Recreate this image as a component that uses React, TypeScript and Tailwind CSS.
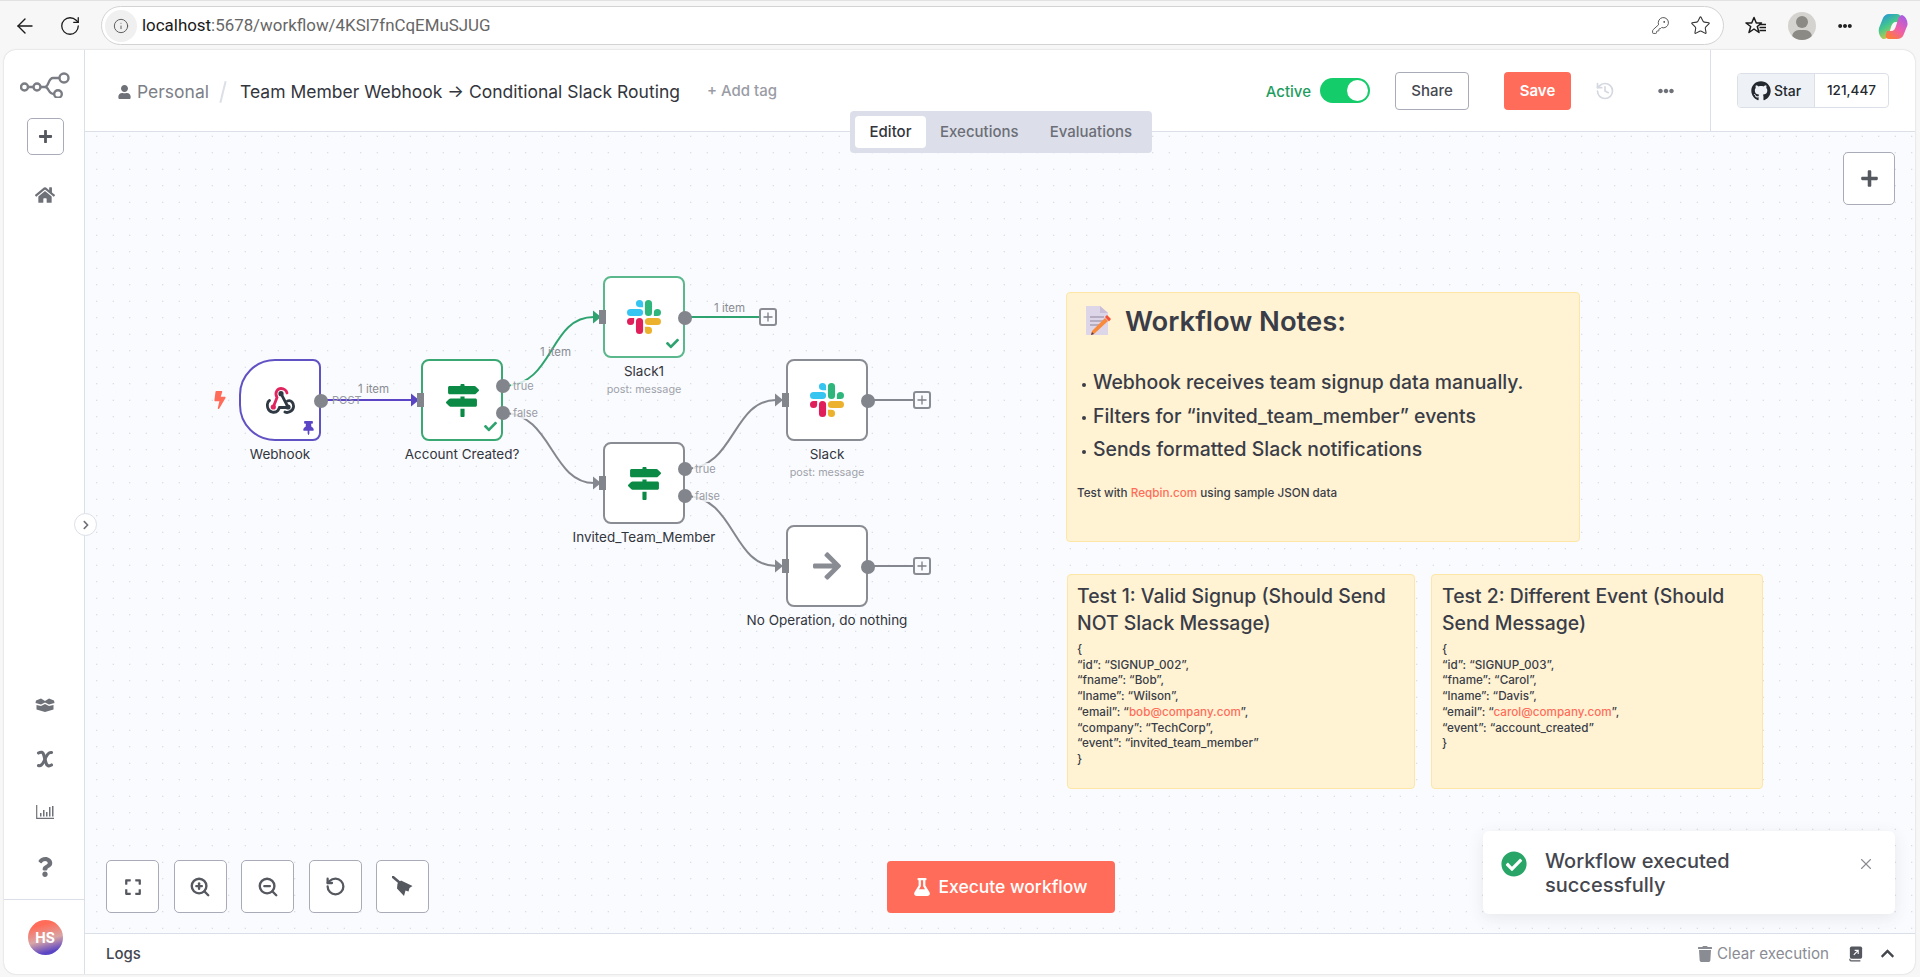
import React from 'react';
import { ArrowLeft, RotateCw, RotateCcw, Info, KeyRound, Star, X, History, ZoomIn, ZoomOut } from 'lucide-react';
import {
  FaHome, FaPlus, FaQuestion, FaExpand,
  FaUser, FaEllipsisH, FaGithub, FaMapSigns, FaCheck, FaBolt, FaThumbtack, FaArrowRight,
  FaFlask, FaTrash, FaCheckCircle, FaChevronUp, FaChevronRight,
} from 'react-icons/fa';

function SlackIcon() {
  return (
    <svg viewBox="0 0 24 24" className="w-[34px] h-[34px]">
      <path fill="#E01E5A" d="M5.042 15.165a2.528 2.528 0 0 1-2.52 2.523A2.528 2.528 0 0 1 0 15.165a2.527 2.527 0 0 1 2.522-2.52h2.52v2.52zM6.313 15.165a2.527 2.527 0 0 1 2.521-2.52 2.527 2.527 0 0 1 2.521 2.52v6.313A2.528 2.528 0 0 1 8.834 24a2.528 2.528 0 0 1-2.521-2.522v-6.313z" />
      <path fill="#36C5F0" d="M8.834 5.042a2.528 2.528 0 0 1-2.521-2.52A2.528 2.528 0 0 1 8.834 0a2.528 2.528 0 0 1 2.521 2.522v2.52H8.834zM8.834 6.313a2.528 2.528 0 0 1 2.521 2.521 2.528 2.528 0 0 1-2.521 2.521H2.522A2.528 2.528 0 0 1 0 8.834a2.528 2.528 0 0 1 2.522-2.521h6.312z" />
      <path fill="#2EB67D" d="M18.956 8.834a2.528 2.528 0 0 1 2.522-2.521A2.528 2.528 0 0 1 24 8.834a2.528 2.528 0 0 1-2.522 2.521h-2.522V8.834zM17.688 8.834a2.528 2.528 0 0 1-2.523 2.521 2.527 2.527 0 0 1-2.52-2.521V2.522A2.527 2.527 0 0 1 15.165 0a2.528 2.528 0 0 1 2.523 2.522v6.312z" />
      <path fill="#ECB22E" d="M15.165 18.956a2.528 2.528 0 0 1 2.523 2.522A2.528 2.528 0 0 1 15.165 24a2.527 2.527 0 0 1-2.52-2.522v-2.522h2.52zM15.165 17.688a2.527 2.527 0 0 1-2.52-2.523 2.526 2.526 0 0 1 2.52-2.52h6.313A2.527 2.527 0 0 1 24 15.165a2.528 2.528 0 0 1-2.522 2.523h-6.313z" />
    </svg>
  );
}

function WebhookIcon() {
  return (
    <svg viewBox="0 0 29 27" className="w-[29px] h-[27px]" fill="none" strokeWidth="2.800" strokeLinecap="round">
      <path stroke="#2f3943" d="M3.500 13.500C1 15 1 19 2 21.500C3.500 25.500 9 26.500 12 23.500L13.500 20.500H22" />
      <path stroke="#2f3943" d="M15 6.700L22 20" />
      <path stroke="#2f3943" d="M21.500 14C25 12.500 28 16 27.500 20C27 24 22 26.500 19 25" />
      <path stroke="#e0245e" d="M7.300 20L11 10.500C8 5 12 1.500 15 1.500C18 1.500 20.500 3.500 21 6" />
      <circle cx="7.300" cy="20" r="2.600" fill="#e0245e" />
      <circle cx="15" cy="6.700" r="2.600" fill="#2f3943" />
      <circle cx="22" cy="20" r="2.600" fill="#2f3943" />
    </svg>
  );
}

function IfIcon() {
  return <FaMapSigns className="w-[33px] h-[33px] text-[#0b8a46]" />;
}

function NoOpIcon() {
  return <FaArrowRight className="w-[32px] h-[32px] text-[#8a8c94]" />;
}

function BroomIcon() {
  return (
    <svg viewBox="0 0 21 21" className="w-[21px] h-[21px]">
      <path d="M1 1L7.500 6.500" stroke="#565860" strokeWidth="2.500" strokeLinecap="round" />
      <path d="M5.500 7.500L9 4.500L20.500 10L17.500 12L16.500 15.500L13.500 14.500L12 20L5 12.500Z" fill="#565860" />
    </svg>
  );
}

function Dot({ cls }: { cls: string }) {
  return <span className={`absolute w-[14px] h-[14px] rounded-full bg-[#83858d] ${cls}`} />;
}

function InHandle() {
  return <span className="absolute left-[-6px] top-1/2 -translate-y-1/2 w-[7px] h-[14px] bg-[#83858d]" />;
}

function Node({ pos, border, shape, label, sub, children }: { pos: string; border: string; shape?: string; label: string; sub?: string; children: React.ReactNode }) {
  return (
    <div className={`absolute w-[82px] flex flex-col items-center ${pos}`}>
      <div className={`relative w-[82px] h-[82px] bg-white border-2 flex items-center justify-center ${border} ${shape ?? 'rounded-[8px]'}`}>
        {children}
      </div>
      <div className="mt-[3px] whitespace-nowrap text-[13.5px] leading-[20px] text-[#33353d]">{label}</div>
      {sub && <div className="mt-[1px] whitespace-nowrap text-[10.8px] leading-[16px] text-[#a0a2aa]">{sub}</div>}
    </div>
  );
}

function EdgeLabel({ pos, children }: { pos: string; children: React.ReactNode }) {
  return <span className={`absolute -translate-y-1/2 whitespace-nowrap text-[11.5px] leading-[14px] text-[#8a8c94] ${pos}`}>{children}</span>;
}

function PortLabel({ pos, children }: { pos: string; children: React.ReactNode }) {
  return <span className={`absolute -translate-y-1/2 whitespace-nowrap bg-[#f9fbfe]/80 pl-[2px] text-[11px] leading-[12px] text-[#9a9ca5] ${pos}`}>{children}</span>;
}

function AddBox({ pos }: { pos: string }) {
  return (
    <div className={`absolute w-[18px] h-[18px] rounded-[3px] border-2 border-[#8a8c94] bg-[#f9fbfe] flex items-center justify-center ${pos}`}>
      <svg viewBox="0 0 10 10" className="w-[10px] h-[10px]"><path d="M5 0.500V9.500M0.500 5H9.500" stroke="#7d7f87" strokeWidth="1.300" /></svg>
    </div>
  );
}

function ZoomBtn({ children }: { children: React.ReactNode }) {
  return <button className="w-[53px] h-[53px] rounded-[5px] border border-[#a9acb8] bg-white flex items-center justify-center text-[#565860]">{children}</button>;
}

function NoteEmoji() {
  return (
    <svg viewBox="0 0 26 30" className="w-[26px] h-[30px] shrink-0">
      <path d="M1 0H15L23 7V29H1Z" fill="#ddd5e8" />
      <path d="M15 0L23 7H15Z" fill="#c8bed8" />
      <path d="M5 11H19M5 15H19M5 19H15" stroke="#a9a0b5" strokeWidth="1.400" />
      <path d="M9 28L6 29L7 25L20 12L23 15Z" fill="#f98a3c" />
      <path d="M20 11L22 9L26 13L24 15.500Z" fill="#f4523b" />
      <path d="M6 29L7 26L9 28Z" fill="#5a3a44" />
    </svg>
  );
}

function Copilot() {
  return (
    <svg viewBox="0 0 30 27" className="w-[30px] h-[27px]">
      <defs>
        <linearGradient id="cpA" x1="0" y1="0" x2="0.6" y2="1">
          <stop offset="0" stopColor="#1f8be8" />
          <stop offset="0.5" stopColor="#46c88a" />
          <stop offset="1" stopColor="#f4c638" />
        </linearGradient>
        <linearGradient id="cpB" x1="1" y1="0" x2="0.3" y2="1">
          <stop offset="0" stopColor="#9a5cf0" />
          <stop offset="0.6" stopColor="#ef5fa8" />
          <stop offset="1" stopColor="#fb7a3c" />
        </linearGradient>
      </defs>
      <path d="M11 1H19C21 1 22 2 23 4L25 9H18C15 9 14 11 13 14L11 21C10 24 8 26 6 26H5C2 24 0 20 1 15L5 5C6 3 8 1 11 1Z" fill="url(#cpA)" />
      <path d="M19 26H11C9 26 8 25 7.500 23L9 18H13C16 18 17 16 18 13L19.500 8C20 5 22 2 24 2C27 3 30 7 29.500 12L25.500 22C24.500 24.500 22 26 19 26Z" fill="url(#cpB)" />
    </svg>
  );
}

function FavIcon() {
  return (
    <svg viewBox="0 0 22 20" className="w-[22px] h-[20px]" fill="none" stroke="#1a1a1a" strokeWidth="1.500" strokeLinejoin="round">
      <path d="M9 1.500L11.300 7H16.500L12.300 10.500L14 16.500L9 13L4 16.500L5.700 10.500L1 7H6.700Z" />
      <path d="M14 8.500H21M14.500 11.500H21M14.500 14.500H21" />
    </svg>
  );
}

function Logo() {
  return (
    <svg viewBox="0 0 50 26" className="w-[50px] h-[26px]" fill="none" stroke="#7b7d85" strokeWidth="2.400">
      <circle cx="4.500" cy="15" r="3.500" />
      <circle cx="17" cy="15" r="3.500" />
      <circle cx="44" cy="6" r="4.500" />
      <circle cx="38" cy="22" r="3.800" />
      <path d="M8 15H13.500M20.500 15H25C29 15 28 6 33 6H39.500M25 15C29 15 28 22 34 22" />
    </svg>
  );
}

function BoxIcon() {
  return (
    <svg viewBox="0 0 20 14" className="w-[20px] h-[14px]">
      <path d="M1 2.500L6 0.500L10 3L14 0.500L19 2.500L19.500 5L14 6.500L10 4.500L6 6.500L0.500 5Z" fill="#6f7179" />
      <path d="M1.500 7L6 8L10 6L14 8L18.500 7V11.500L10 14L1.500 11.500Z" fill="#6f7179" />
    </svg>
  );
}

function VarIcon() {
  return (
    <svg viewBox="0 0 18 18" className="w-[18px] h-[18px]" fill="none" stroke="#6a6c74" strokeWidth="3.100" strokeLinecap="round">
      <path d="M2.500 3C5 1.500 7 2 7.800 5L10 13C10.800 16 13 16.500 15.500 15" />
      <path d="M15.500 2.500C13 2 11 4 9 9C7 14 5 16.500 2.500 15.500" />
    </svg>
  );
}

function ChartIcon() {
  return (
    <svg viewBox="0 0 18 14" className="w-[18px] h-[14px]">
      <path d="M0.700 0V13.300H18" fill="none" stroke="#6f7179" strokeWidth="1.200" />
      <path d="M4 8H5.500V11.500H4ZM7 5H8.500V11.500H7ZM10 7H11.500V11.500H10ZM13 2H14.500V11.500H13ZM16 1H17.500V11.500H16Z" fill="#6f7179" />
    </svg>
  );
}

function Edges() {
  return (
    <svg className="absolute inset-0 w-full h-full pointer-events-none" fill="none" strokeWidth="2">
      <path d="M236 268H326" stroke="#5b45c5" />
      <path d="M326 261.500L334 268L326 274.500Z" fill="#5b45c5" />
      <path d="M418 254C470 254 463 185 509 185" stroke="#2ea36f" />
      <path d="M508 178.500L516 185L508 191.500Z" fill="#2ea36f" />
      <path d="M600 185H676" stroke="#2ea36f" />
      <path d="M418 281C467 281 466 351 509 351" stroke="#85878f" />
      <path d="M508 344.500L516 351L508 357.500Z" fill="#85878f" />
      <path d="M600 337C650 337 647 268 691 268" stroke="#85878f" />
      <path d="M690 261.500L698 268L690 274.500Z" fill="#85878f" />
      <path d="M600 364C650 364 647 434 691 434" stroke="#85878f" />
      <path d="M690 427.500L698 434L690 440.500Z" fill="#85878f" />
      <path d="M782 268H830" stroke="#85878f" />
      <path d="M782 434H830" stroke="#85878f" />
    </svg>
  );
}

function Canvas() {
  return (
    <div className="relative flex-1 bg-[#f9fbfe] bg-[radial-gradient(circle,#c3c6d0_0.7px,transparent_0.9px)] bg-[size:16.5px_16.5px] bg-[position:3.5px_-4px] overflow-hidden">
      <Edges />

      <EdgeLabel pos="left-[273px] top-[257px]">1 item</EdgeLabel>
      <EdgeLabel pos="left-[455px] top-[220px]">1 item</EdgeLabel>
      <EdgeLabel pos="left-[629px] top-[176px]">1 item</EdgeLabel>
      <span className="absolute left-[247px] top-[268px] -translate-y-1/2 text-[11px] leading-[12px] text-[#9a9ca5]">POST</span>
      <PortLabel pos="left-[426px] top-[254px]">true</PortLabel>
      <PortLabel pos="left-[426px] top-[281px]">false</PortLabel>
      <PortLabel pos="left-[608px] top-[337px]">true</PortLabel>
      <PortLabel pos="left-[608px] top-[364px]">false</PortLabel>

      <FaBolt className="absolute left-[129px] top-[259px] w-[12px] h-[18px] text-[#ff6d5a]" />

      <Node pos="left-[154px] top-[227px]" border="border-[#6152c4]" shape="rounded-[36px_8px_8px_36px]" label="Webhook">
        <WebhookIcon />
        <Dot cls="right-[-9px] top-[33px]" />
        <FaThumbtack className="absolute right-[4px] bottom-[4px] w-[13px] h-[14px] text-[#5b45c5]" />
      </Node>

      <Node pos="left-[336px] top-[227px]" border="border-[#3aa873]" label="Account Created?">
        <IfIcon />
        <InHandle />
        <Dot cls="right-[-9px] top-[18px]" />
        <Dot cls="right-[-9px] top-[45px]" />
        <FaCheck className="absolute right-[4px] bottom-[6px] w-[13px] h-[13px] text-[#2ea36f]" />
      </Node>

      <Node pos="left-[518px] top-[144px]" border="border-[#5ab88c]" label="Slack1" sub="post: message">
        <SlackIcon />
        <InHandle />
        <Dot cls="right-[-9px] top-[33px]" />
        <FaCheck className="absolute right-[4px] bottom-[6px] w-[13px] h-[13px] text-[#2ea36f]" />
      </Node>

      <Node pos="left-[518px] top-[310px]" border="border-[#8a8c94]" label="Invited_Team_Member">
        <IfIcon />
        <InHandle />
        <Dot cls="right-[-9px] top-[18px]" />
        <Dot cls="right-[-9px] top-[45px]" />
      </Node>

      <Node pos="left-[701px] top-[227px]" border="border-[#8a8c94]" label="Slack" sub="post: message">
        <SlackIcon />
        <InHandle />
        <Dot cls="right-[-9px] top-[33px]" />
      </Node>

      <Node pos="left-[701px] top-[393px]" border="border-[#8a8c94]" label="No Operation, do nothing">
        <NoOpIcon />
        <InHandle />
        <Dot cls="right-[-9px] top-[33px]" />
      </Node>

      <AddBox pos="left-[674px] top-[176px]" />
      <AddBox pos="left-[828px] top-[259px]" />
      <AddBox pos="left-[828px] top-[425px]" />

      {/* Sticky notes */}
      <div className="absolute left-[981px] top-[160px] w-[514px] h-[250px] rounded-[4px] border border-[#fde6a6] bg-[#fff3d4] text-[#3a3d47]">
        <div className="flex items-center gap-[14px] pl-[18px] pt-[11px]">
          <NoteEmoji />
          <span className="text-[27.4px] leading-[34px] font-semibold">Workflow Notes:</span>
        </div>
        <ul className="mt-[28px] pl-[15px] text-[19.4px] leading-[33.5px] font-medium">
          {['Webhook receives team signup data manually.', 'Filters for “invited_team_member” events', 'Sends formatted Slack notifications'].map((t) => (
            <li key={t} className="flex items-center gap-[7px]">
              <span className="w-[4px] h-[4px] mt-[4px] rounded-full bg-[#3a3d47] shrink-0" />
              {t}
            </li>
          ))}
        </ul>
        <p className="mt-[18px] pl-[10px] text-[11.7px] leading-[16px] font-medium">
          Test with <span className="text-[#ff6d5a]">Reqbin.com</span> using sample JSON data
        </p>
      </div>

      <div className="absolute left-[982px] top-[442px] w-[348px] h-[215px] rounded-[4px] border border-[#fde6a6] bg-[#fff3d4] text-[#3a3d47] pl-[9px] pr-[10px] pt-[8px]">
        <h3 className="text-[19.4px] leading-[27px] font-medium">Test 1: Valid Signup (Should Send NOT Slack Message)</h3>
        <div className="mt-[5px] text-[11.7px] leading-[15.7px] font-medium">
          <div>{'{'}</div>
          <div>“id”: “SIGNUP_002”,</div>
          <div>“fname”: “Bob”,</div>
          <div>“lname”: “Wilson”,</div>
          <div>“email”: “<span className="text-[#ff6d5a]">bob@company.com</span>”,</div>
          <div>“company”: “TechCorp”,</div>
          <div>“event”: “invited_team_member”</div>
          <div>{'}'}</div>
        </div>
      </div>

      <div className="absolute left-[1346px] top-[442px] w-[332px] h-[215px] rounded-[4px] border border-[#fde6a6] bg-[#fff3d4] text-[#3a3d47] px-[10px] pt-[8px]">
        <h3 className="text-[19.4px] leading-[27px] font-medium">Test 2: Different Event (Should Send Message)</h3>
        <div className="mt-[5px] text-[11.7px] leading-[15.7px] font-medium">
          <div>{'{'}</div>
          <div>“id”: “SIGNUP_003”,</div>
          <div>“fname”: “Carol”,</div>
          <div>“lname”: “Davis”,</div>
          <div>“email”: “<span className="text-[#ff6d5a]">carol@company.com</span>”,</div>
          <div>“event”: “account_created”</div>
          <div>{'}'}</div>
        </div>
      </div>

      {/* Floating controls */}
      <button className="absolute right-[20px] top-[20px] w-[52px] h-[53px] rounded-[5px] border border-[#a9acb8] bg-white flex items-center justify-center text-[#565860]">
        <FaPlus className="w-[19px] h-[19px]" />
      </button>

      <div className="absolute left-[21px] bottom-[20px] flex gap-[14.5px]">
        <ZoomBtn><FaExpand className="w-[18px] h-[18px]" /></ZoomBtn>
        <ZoomBtn><ZoomIn className="w-[22px] h-[22px]" strokeWidth={2.6} /></ZoomBtn>
        <ZoomBtn><ZoomOut className="w-[22px] h-[22px]" strokeWidth={2.6} /></ZoomBtn>
        <ZoomBtn><RotateCcw className="w-[21px] h-[21px]" strokeWidth={2.6} /></ZoomBtn>
        <ZoomBtn><BroomIcon /></ZoomBtn>
      </div>

      <button className="absolute left-[802px] bottom-[20px] w-[228px] h-[52px] rounded-[4px] bg-[#ff6d5a] text-white flex items-center justify-center gap-[8px] text-[17.5px] font-medium">
        <FaFlask className="w-[16px] h-[18px]" />
        Execute workflow
      </button>

      <div className="absolute right-[20px] bottom-[19px] w-[412px] h-[83px] rounded-[6px] bg-white shadow-[0_4px_16px_rgba(68,68,80,0.1)] flex items-start pl-[18px] pt-[18px]">
        <FaCheckCircle className="w-[26px] h-[26px] text-[#29a568] mt-[2px] shrink-0" />
        <div className="ml-[18px] w-[230px] text-[20px] leading-[24px] font-medium text-[#45474f]">Workflow executed successfully</div>
        <X className="ml-auto mr-[20px] mt-[6px] w-[18px] h-[18px] text-[#8a8c94]" strokeWidth={1.5} />
      </div>
    </div>
  );
}

export default function App() {
  return (
    <div className="h-[977px] w-[1920px] flex flex-col bg-[#f7f7f7] font-['Inter',sans-serif] overflow-hidden pb-[3px]">
      {/* Browser bar */}
      <div className="h-[50px] shrink-0 flex items-center border-t border-[#e2e2e2] text-[#1a1a1a]">
        <ArrowLeft className="ml-[13px] w-[24px] h-[24px]" strokeWidth={1.4} />
        <RotateCw className="ml-[22px] w-[22px] h-[22px]" strokeWidth={1.4} />
        <div className="ml-[20px] w-[1623px] h-[39px] rounded-full border border-[#d3d3d3] bg-white flex items-center pl-[3px]">
          <span className="w-[32px] h-[32px] rounded-full bg-[#f0f0f0] flex items-center justify-center">
            <Info className="w-[16px] h-[16px] text-[#555]" strokeWidth={1.4} />
          </span>
          <span className="ml-[5px] font-['Roboto',sans-serif] text-[16.9px] text-[#666]"><span className="text-[#1a1a1a]">localhost</span>:5678/workflow/4KSl7fnCqEMuSJUG</span>
          <KeyRound className="ml-auto w-[19px] h-[19px] text-[#444]" strokeWidth={1.1} />
          <Star className="ml-[20px] mr-[12px] w-[21px] h-[21px] text-[#333]" strokeWidth={1.2} />
        </div>
        <span className="ml-[21px]"><FavIcon /></span>
        <span className="ml-[21px] w-[28px] h-[28px] rounded-full bg-[#d4d3cf] relative overflow-hidden shrink-0">
          <span className="absolute left-[8px] top-[4px] w-[12px] h-[12px] rounded-full bg-[#8c8a85]" />
          <span className="absolute left-[4px] top-[18px] w-[20px] h-[14px] rounded-full bg-[#8c8a85]" />
        </span>
        <FaEllipsisH className="ml-[22px] w-[14px] h-[14px] text-[#222]" />
        <span className="ml-[26px] mt-[2px]"><Copilot /></span>
      </div>

      {/* App card */}
      <div className="flex-1 min-h-0 ml-[4px] mr-[5px] flex rounded-[12px] bg-white shadow-[0_0_2px_rgba(0,0,0,0.2)] overflow-hidden">
        <aside className="w-[81px] shrink-0 border-r border-[#dbdfe7] flex flex-col items-center pl-[2px] text-[#6f7179]">
          <div className="mt-[22px]"><Logo /></div>
          <button className="mt-[20px] w-[37px] h-[37px] rounded-[5px] border border-[#a9acb8] flex items-center justify-center text-[#565860]">
            <FaPlus className="w-[15px] h-[15px]" />
          </button>
          <FaHome className="mt-[30px] w-[20px] h-[20px]" />
          <div className="mt-auto"><BoxIcon /></div>
          <div className="mt-[38px]"><VarIcon /></div>
          <div className="mt-[37px]"><ChartIcon /></div>
          <FaQuestion className="mt-[38px] w-[16px] h-[20px]" />
          <div className="mt-[22px] ml-[-2px] w-[80px] border-t border-[#dbdfe7] h-[75px] flex items-center justify-center">
            <div className="ml-[2px] w-[35px] h-[35px] rounded-full bg-[linear-gradient(165deg,#ff6d5a_20%,#d9a5a5_55%,#5b45c5_85%)] flex items-center justify-center text-white text-[14px] font-bold">HS</div>
          </div>
        </aside>

        <div className="relative flex-1 min-w-0 flex flex-col">
          <header className="h-[82px] shrink-0 border-b border-[#dbdfe7] flex items-center pl-[33px]">
            <FaUser className="mt-[3px] w-[13px] h-[14px] text-[#6f7179]" />
            <span className="mt-[3px] ml-[6px] text-[17.5px] text-[#7d7f87]">Personal</span>
            <span className="mt-[3px] ml-[13px] w-[2px] h-[22px] bg-[#dbdfe7] rotate-[14deg]" />
            <span className="mt-[3px] ml-[16px] text-[17.5px] text-[#33353d] whitespace-nowrap">Team Member Webhook → Conditional Slack Routing</span>
            <span className="mt-[2px] ml-[27px] text-[15px] font-medium text-[#9a9ca5] whitespace-nowrap">+ Add tag</span>

            <div className="ml-auto flex items-center h-full">
              <span className="pt-[3px] text-[15px] font-medium text-[#1f9d60]">Active</span>
              <span className="ml-[9px] relative w-[50px] h-[25px] rounded-full bg-[#14cc6a]">
                <span className="absolute right-[2px] top-[2px] w-[21px] h-[21px] rounded-full bg-white" />
              </span>
              <button className="ml-[25px] w-[74px] h-[38px] pt-[2px] rounded-[4px] border border-[#a9acb8] text-[15px] font-medium text-[#45474f]">Share</button>
              <button className="ml-[35px] w-[67px] h-[38px] pt-[2px] rounded-[4px] bg-[#ff6d5a] text-white text-[15px] font-semibold">Save</button>
              <History className="ml-[24px] w-[20px] h-[20px] text-[#d5d8e0]" />
              <FaEllipsisH className="ml-[43px] w-[16px] h-[16px] text-[#6f7179]" />
              <div className="ml-[36px] h-full border-l border-[#dbdfe7] flex items-center pl-[26px] pr-[26px]">
                <div className="w-[152px] h-[35px] rounded-[4px] border border-[#dbdfe7] flex overflow-hidden text-[14px] font-medium text-[#24292f]">
                  <span className="w-[77px] bg-[#eef2f6] border-r border-[#dbdfe7] flex items-center justify-center gap-[3px]">
                    <FaGithub className="w-[20px] h-[20px]" />Star
                  </span>
                  <span className="flex-1 flex items-center justify-center text-[13.5px]">121,447</span>
                </div>
              </div>
            </div>
          </header>

          <Canvas />

          <footer className="h-[41px] shrink-0 border-t border-[#dbdfe7] flex items-center pl-[21px] text-[15px]">
            <span className="font-medium text-[#45474f]">Logs</span>
            <div className="ml-auto flex items-center text-[#8a8c94] pr-[20px]">
              <FaTrash className="w-[14px] h-[18px]" />
              <span className="ml-[5px] text-[15.2px]">Clear execution</span>
              <svg viewBox="0 0 16 18" className="ml-[20px] w-[14px] h-[17px]">
                <rect x="1" y="1" width="14" height="14" rx="2" fill="#55575f" />
                <path d="M1 15V16C1 17 2 17.500 3 17.500H13" fill="none" stroke="#55575f" strokeWidth="1.300" />
                <path d="M5.500 10.500L10.500 5.500M6.500 5.500H10.500V9.500" fill="none" stroke="#fff" strokeWidth="1.300" />
              </svg>
              <FaChevronUp className="ml-[17px] w-[15px] h-[15px] text-[#45474f]" />
            </div>
          </footer>

          {/* Tabs overlap the header's bottom edge */}
          <div className="absolute left-[765px] top-[61px] w-[302px] h-[42px] rounded-[4px] bg-[#dcdfe9] flex items-center pl-[5px] text-[15px] font-medium text-[#6c6e77]">
            <span className="w-[71px] h-[32px] rounded-[4px] bg-white text-[#33353d] flex items-center justify-center">Editor</span>
            <span className="ml-[14px]">Executions</span>
            <span className="ml-[31px]">Evaluations</span>
          </div>

          {/* Sidebar collapse toggle */}
          <button className="absolute left-[-11px] top-[463px] w-[23px] h-[23px] rounded-full border border-[#dbdfe7] bg-white flex items-center justify-center text-[#6f7179]">
            <FaChevronRight className="w-[10px] h-[10px]" />
          </button>
        </div>
      </div>
    </div>
  );
}
